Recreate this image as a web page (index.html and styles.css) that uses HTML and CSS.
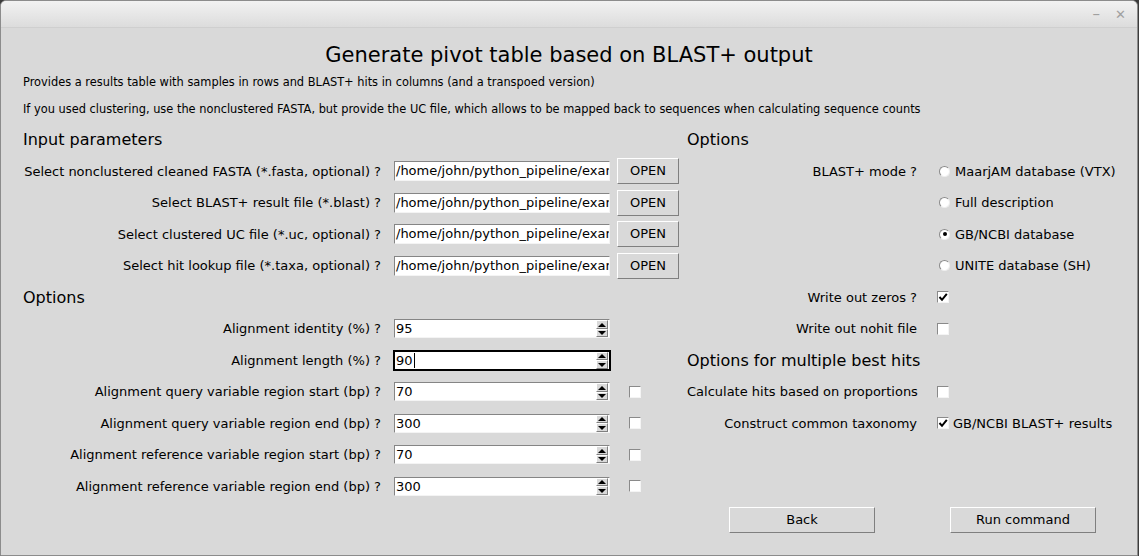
FILE: index.html
```html
<!DOCTYPE html>
<html>
<head>
<meta charset="utf-8">
<link rel="stylesheet" href="styles.css">
</head>
<body>
<div class="window">
  <div class="titlebar">
    <span class="tb-btn tb-min">–</span>
    <span class="tb-btn tb-close">✕</span>
  </div>
  <div class="content">
    <h1 class="title">Generate pivot table based on BLAST+ output</h1>
    <p class="desc">Provides a results table with samples in rows and BLAST+ hits in columns (and a transpoed version)</p>
    <p class="desc">If you used clustering, use the nonclustered FASTA, but provide the UC file, which allows to be mapped back to sequences when calculating sequence counts</p>

    <div class="grid">
      <!-- row 0 -->
      <div class="heading span3">Input parameters</div>
      <div class="heading span2">Options</div>

      <!-- row 1 -->
      <div class="label">Select nonclustered cleaned FASTA (*.fasta, optional) ?</div>
      <div class="cell"><div class="entry">/home/john/python_pipeline/example/blast_output/clean.fasta</div></div>
      <div class="cell"><div class="btn open">OPEN</div></div>
      <div class="rlabel">BLAST+ mode ?</div>
      <div class="cell ctl"><span class="radio"></span><span class="opt">MaarjAM database (VTX)</span></div>

      <!-- row 2 -->
      <div class="label">Select BLAST+ result file (*.blast) ?</div>
      <div class="cell"><div class="entry">/home/john/python_pipeline/example/blast_output/result.blast</div></div>
      <div class="cell"><div class="btn open">OPEN</div></div>
      <div class="rlabel"></div>
      <div class="cell ctl"><span class="radio"></span><span class="opt">Full description</span></div>

      <!-- row 3 -->
      <div class="label">Select clustered UC file (*.uc, optional) ?</div>
      <div class="cell"><div class="entry">/home/john/python_pipeline/example/blast_output/clusters.uc</div></div>
      <div class="cell"><div class="btn open">OPEN</div></div>
      <div class="rlabel"></div>
      <div class="cell ctl"><span class="radio checked"></span><span class="opt">GB/NCBI database</span></div>

      <!-- row 4 -->
      <div class="label">Select hit lookup file (*.taxa, optional) ?</div>
      <div class="cell"><div class="entry">/home/john/python_pipeline/example/blast_output/hits.taxa</div></div>
      <div class="cell"><div class="btn open">OPEN</div></div>
      <div class="rlabel"></div>
      <div class="cell ctl"><span class="radio"></span><span class="opt">UNITE database (SH)</span></div>

      <!-- row 5 -->
      <div class="heading span3">Options</div>
      <div class="rlabel">Write out zeros ?</div>
      <div class="cell ctl"><span class="check on"><svg viewBox="0 0 10 10" width="10" height="10"><path d="M1.5 5 L4 7.8 L8.8 1.8" fill="none" stroke="#000" stroke-width="2"/></svg></span></div>

      <!-- row 6 -->
      <div class="label">Alignment identity (%) ?</div>
      <div class="cell"><div class="spin"><span class="spin-val">95</span><span class="arrows"><span class="arr up"></span><span class="arr down"></span></span></div></div>
      <div class="cell"></div>
      <div class="rlabel">Write out nohit file</div>
      <div class="cell ctl"><span class="check"></span></div>

      <!-- row 7 -->
      <div class="label">Alignment length (%) ?</div>
      <div class="cell"><div class="spin focus"><span class="spin-val">90<span class="caret"></span></span><span class="arrows"><span class="arr up"></span><span class="arr down"></span></span></div></div>
      <div class="cell"></div>
      <div class="heading span2">Options for multiple best hits</div>

      <!-- row 8 -->
      <div class="label">Alignment query variable region start (bp) ?</div>
      <div class="cell"><div class="spin"><span class="spin-val">70</span><span class="arrows"><span class="arr up"></span><span class="arr down"></span></span></div></div>
      <div class="cell"><span class="check lcheck"></span></div>
      <div class="rlabel">Calculate hits based on proportions</div>
      <div class="cell ctl"><span class="check"></span></div>

      <!-- row 9 -->
      <div class="label">Alignment query variable region end (bp) ?</div>
      <div class="cell"><div class="spin"><span class="spin-val">300</span><span class="arrows"><span class="arr up"></span><span class="arr down"></span></span></div></div>
      <div class="cell"><span class="check lcheck"></span></div>
      <div class="rlabel">Construct common taxonomy</div>
      <div class="cell ctl"><span class="check on"><svg viewBox="0 0 10 10" width="10" height="10"><path d="M1.5 5 L4 7.8 L8.8 1.8" fill="none" stroke="#000" stroke-width="2"/></svg></span><span class="copt">GB/NCBI BLAST+ results</span></div>

      <!-- row 10 -->
      <div class="label">Alignment reference variable region start (bp) ?</div>
      <div class="cell"><div class="spin"><span class="spin-val">70</span><span class="arrows"><span class="arr up"></span><span class="arr down"></span></span></div></div>
      <div class="cell"><span class="check lcheck"></span></div>
      <div class="rlabel"></div>
      <div class="cell"></div>

      <!-- row 11 -->
      <div class="label">Alignment reference variable region end (bp) ?</div>
      <div class="cell"><div class="spin"><span class="spin-val">300</span><span class="arrows"><span class="arr up"></span><span class="arr down"></span></span></div></div>
      <div class="cell"><span class="check lcheck"></span></div>
      <div class="rlabel"></div>
      <div class="cell"></div>
    </div>

    <div class="footer">
      <div class="btn wide">Back</div>
      <div class="btn wide">Run command</div>
    </div>
  </div>
</div>
</body>
</html>
```

FILE: styles.css
```css
* { box-sizing: border-box; }
html, body { margin: 0; padding: 0; }
body {
  width: 1139px;
  height: 556px;
  overflow: hidden;
  background: #3c3c3c;
  font-family: "DejaVu Sans", "Liberation Sans", sans-serif;
  color: #000;
}
.window {
  width: 1138px;
  height: 556px;
  background: #d9d9d9;
  border: 1px solid #8c8c8c;
  border-radius: 6px 6px 0 0;
  overflow: hidden;
}
.titlebar {
  height: 27px;
  background: linear-gradient(#f2f2f2, #dcdcdc);
  border-bottom: 1px solid #cfcfcf;
  display: flex;
  justify-content: flex-end;
  align-items: center;
  gap: 15px;
  padding-right: 11px;
}
.tb-btn {
  color: #a0a0a0;
  font-size: 15px;
  line-height: 15px;
}
.tb-close { font-weight: bold; font-size: 13px; }
.content {
  padding-left: 22px;
}
.title {
  margin: 14px 0 0;
  font-size: 21px;
  font-weight: normal;
  line-height: 27px;
  text-align: center;
  padding-right: 22px;
  white-space: nowrap;
}
.desc {
  margin: 0;
  font-size: 11.4px;
  line-height: 27px;
  white-space: nowrap;
}
.grid {
  margin-top: 1px;
  display: grid;
  grid-template-columns: 371px 223px 70px 250px 1fr;
  grid-auto-rows: 31.5px;
  align-items: center;
  font-size: 13px;
}
.heading {
  font-size: 16px;
  white-space: nowrap;
}
.span3 { grid-column: span 3; }
.span2 { grid-column: span 2; }
.label {
  text-align: right;
  padding-right: 13px;
  white-space: nowrap;
}
.rlabel {
  text-align: right;
  padding-right: 20px;
  white-space: nowrap;
}
.cell {
  display: flex;
  align-items: center;
}
.entry {
  width: 216px;
  height: 20px;
  background: #fff;
  border: 1px solid;
  border-color: #858585 #f4f4f4 #f4f4f4 #858585;
  padding-left: 1px;
  line-height: 18px;
  white-space: nowrap;
  overflow: hidden;
}
.btn {
  background: #d9d9d9;
  border: 1px solid;
  border-color: #ffffff #7f7f7f #7f7f7f #ffffff;
  text-align: center;
  font-size: 13px;
  line-height: 24px;
  height: 26px;
}
.open { width: 62px; }
.spin {
  width: 216px;
  height: 19px;
  background: #fff;
  border: 1px solid;
  border-color: #858585 #f4f4f4 #f4f4f4 #858585;
  display: flex;
  align-items: stretch;
}
.spin.focus {
  border-color: #000;
  outline: 1px solid #000;
}
.spin-val {
  flex: 1;
  padding-left: 1px;
  line-height: 17px;
  display: flex;
  align-items: center;
}
.caret {
  display: inline-block;
  width: 1px;
  height: 15px;
  background: #000;
  margin-left: 1px;
}
.arrows {
  width: 12px;
  display: flex;
  flex-direction: column;
  margin: 0 1px 0 0;
}
.arr {
  flex: 1;
  background: #d9d9d9;
  border: 1px solid;
  border-color: #ffffff #7f7f7f #7f7f7f #ffffff;
  display: flex;
  align-items: center;
  justify-content: center;
}
.arr::after {
  content: "";
  width: 0;
  height: 0;
  border-left: 4px solid transparent;
  border-right: 4px solid transparent;
}
.arr.up::after { border-bottom: 4px solid #000; }
.arr.down::after { border-top: 4px solid #000; }
.check {
  width: 12px;
  height: 12px;
  background: #fff;
  border: 1px solid;
  border-color: #8a8a8a #f4f4f4 #f4f4f4 #8a8a8a;
  display: inline-flex;
  align-items: center;
  justify-content: center;
  flex: none;
}
.lcheck { margin-left: 12px; }
.copt { margin-left: 4px; white-space: nowrap; }
.radio {
  width: 11px;
  height: 11px;
  border-radius: 50%;
  background: #fff;
  border: 1px solid;
  border-color: #8a8a8a #eeeeee #eeeeee #8a8a8a;
  margin-left: 2px;
  display: inline-flex;
  align-items: center;
  justify-content: center;
  flex: none;
}
.radio.checked::after {
  content: "";
  width: 4px;
  height: 4px;
  border-radius: 50%;
  background: #000;
}
.opt { margin-left: 5px; white-space: nowrap; }
.footer {
  display: flex;
  gap: 75px;
  padding-left: 706px;
  margin-top: 5px;
}
.wide { width: 146px; }
```
